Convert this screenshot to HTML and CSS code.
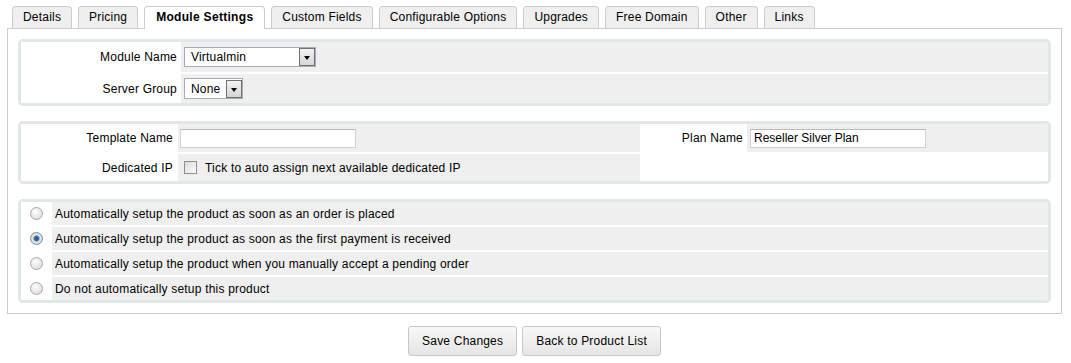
FILE: index.html
```html
<!DOCTYPE html>
<html lang="en">
<head>
  <meta charset="UTF-8" />
  <title>Module Settings</title>
  <link rel="stylesheet" href="styles.css">
</head>
<body>
  <div class="page">
    <ul class="tabs">
      <li>Details</li>
      <li>Pricing</li>
      <li class="active">Module Settings</li>
      <li>Custom Fields</li>
      <li>Configurable Options</li>
      <li>Upgrades</li>
      <li>Free Domain</li>
      <li>Other</li>
      <li>Links</li>
    </ul>

    <div class="panel">
      <!-- module -->
      <div class="box">
        <div class="row r1">
          <div class="label lbl-a">Module Name</div>
          <div class="field">
            <span class="select sel-module">Virtualmin<span class="arrow"></span></span>
          </div>
        </div>
        <div class="row r2">
          <div class="label lbl-a">Server Group</div>
          <div class="field">
            <span class="select sel-group">None<span class="arrow"></span></span>
          </div>
        </div>
      </div>

      <!-- config options -->
      <div class="box">
        <div class="row r3">
          <div class="label lbl-b">Template Name</div>
          <div class="field fld-b"><input class="text" type="text" value=""></div>
          <div class="label lbl-c">Plan Name</div>
          <div class="field"><input class="text" type="text" value="Reseller Silver Plan"></div>
        </div>
        <div class="row r4">
          <div class="label lbl-b">Dedicated IP</div>
          <div class="field fld-b">
            <label class="check"><input type="checkbox"> Tick to auto assign next available dedicated IP</label>
          </div>
          <div class="blank"></div>
        </div>
      </div>

      <!-- setup mode -->
      <div class="box">
        <div class="row opt">
          <div class="radio-cell"><input type="radio" name="autosetup"></div>
          <div class="field">Automatically setup the product as soon as an order is placed</div>
        </div>
        <div class="row opt">
          <div class="radio-cell"><input type="radio" name="autosetup" checked></div>
          <div class="field">Automatically setup the product as soon as the first payment is received</div>
        </div>
        <div class="row opt">
          <div class="radio-cell"><input type="radio" name="autosetup"></div>
          <div class="field">Automatically setup the product when you manually accept a pending order</div>
        </div>
        <div class="row opt">
          <div class="radio-cell"><input type="radio" name="autosetup"></div>
          <div class="field">Do not automatically setup this product</div>
        </div>
      </div>
    </div>

    <div class="buttons">
      <button class="btn">Save Changes</button>
      <button class="btn">Back to Product List</button>
    </div>
  </div>
</body>
</html>
```

FILE: styles.css
```css
* { margin: 0; padding: 0; box-sizing: border-box; }
body { font-family: 'Liberation Sans', Arial, sans-serif; font-size: 12px; letter-spacing: 0.2px; color: #000; background: #fff; }
.page { margin: 0 9px 0 7px; }

/* Tabs */
.tabs { list-style: none; display: flex; align-items: flex-end; padding: 6px 0 0 5px; gap: 6px; position: relative; z-index: 1; }
.tabs li { height: 22px; line-height: 21px; padding: 0 10px; background: #efefef; border: 1px solid #cccccc; border-bottom: none; border-radius: 4px 4px 0 0; }
.tabs li.active { background: #fff; font-weight: bold; letter-spacing: 0.3px; height: 23px; margin-bottom: -1px; padding: 0 11px; }

/* Panel */
.panel { border: 1px solid #cccccc; padding: 10px 10px 10px; }
.box { border: 3px solid #e1e6e6; border-radius: 5px; display: flex; flex-direction: column; gap: 2px; margin-bottom: 15px; }
.box:last-child { margin-bottom: 0; }
.row { display: flex; align-items: stretch; }
.row.r1 { height: 30px; }
.row.r2 { height: 29px; }
.row.r3 { height: 28px; }
.row.r4 { height: 27px; }
.row.opt { height: 23px; }
.label { display: flex; align-items: center; justify-content: flex-end; background: #fff; }
.lbl-a { width: 160px; padding-right: 4px; }
.lbl-b { width: 157px; padding-right: 5px; }
.lbl-c { width: 107px; padding-right: 4px; }
.field { flex: 1; display: flex; align-items: center; background: #efefef; padding-left: 3px; }
.fld-b { flex: 0 0 462px; padding-left: 2px; }
.blank { flex: 1; background: #fff; }

/* Fake selects */
.select { display: inline-flex; align-items: center; justify-content: space-between; height: 20px; background: #fff; border: 1px solid #a5acb5; padding-left: 6px; }
.sel-module { width: 132px; }
.sel-group { width: 59px; height: 21px; }
.arrow { width: 16px; height: 18px; border: 1px solid #707070; background: linear-gradient(#f2f2f2, #d6d6d6); position: relative; }
.arrow::after { content: ""; position: absolute; left: 4px; top: 7px; border-left: 3px solid transparent; border-right: 3px solid transparent; border-top: 4px solid #000; }

/* Inputs */
.text { width: 176px; height: 19px; border: 1px solid #cfcfcf; border-top-color: #b9b9b9; font: inherit; padding: 0 3px; background: #fff; color: #000; }
.check { display: flex; align-items: center; gap: 8px; padding-left: 4px; }
input[type="checkbox"] { appearance: none; width: 13px; height: 13px; border: 1px solid #8f8f8f; background: linear-gradient(135deg, #dcdcdc, #fbfbfb); margin: 0; }
.radio-cell { width: 31px; display: flex; align-items: center; justify-content: center; background: #fff; }
input[type="radio"] { appearance: none; width: 13px; height: 13px; border-radius: 50%; border: 1px solid #a8a8a8; background: radial-gradient(circle at 40% 35%, #fefefe, #d4d4d4); margin: 0; }
input[type="radio"]:checked { border-color: #7d8d9c; background: radial-gradient(circle, #1c4f8a 0, #3d77b4 2.5px, #e6e6e6 3.5px, #d8d8d8 6px); }

/* Buttons */
.buttons { display: flex; justify-content: center; gap: 5px; margin-top: 12px; }
.btn { height: 30px; padding: 0 13px; font: inherit; letter-spacing: inherit; color: #000; border: 1px solid #c8c8c8; border-radius: 3px; background: linear-gradient(#f8f8f8, #e5e5e5); cursor: pointer; }
```
